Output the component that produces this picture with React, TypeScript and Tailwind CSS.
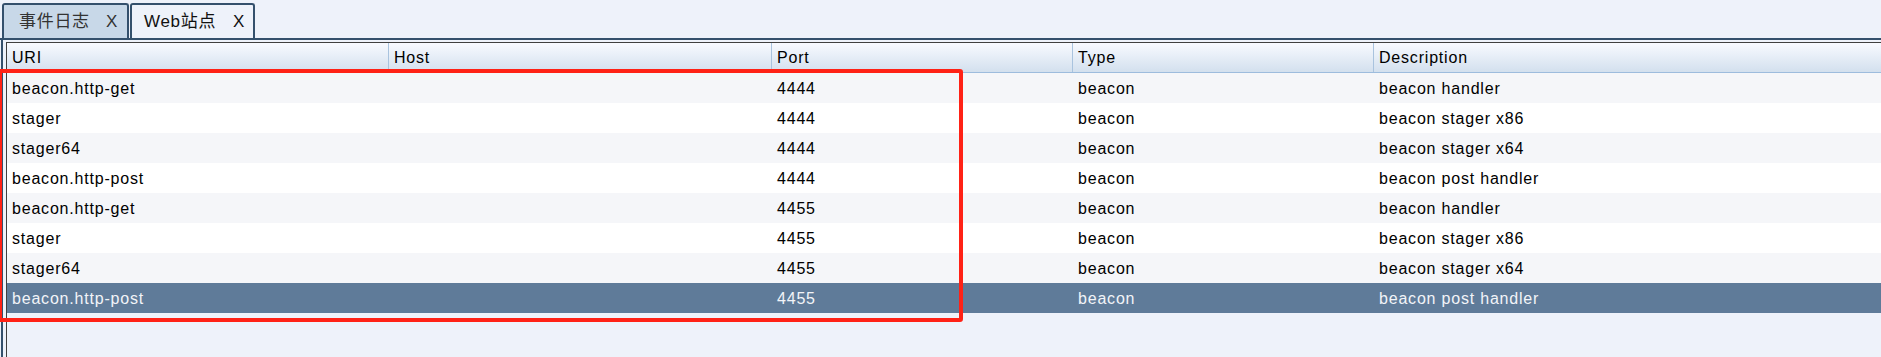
import React from "react";

const columns = [
	{ title: "URI", width: "w-[382px]" },
	{ title: "Host", width: "w-[383px]" },
	{ title: "Port", width: "w-[301px]" },
	{ title: "Type", width: "w-[301px]" },
	{ title: "Description", width: "flex-1" },
];

const rows = [
	["beacon.http-get", "", "4444", "beacon", "beacon handler"],
	["stager", "", "4444", "beacon", "beacon stager x86"],
	["stager64", "", "4444", "beacon", "beacon stager x64"],
	["beacon.http-post", "", "4444", "beacon", "beacon post handler"],
	["beacon.http-get", "", "4455", "beacon", "beacon handler"],
	["stager", "", "4455", "beacon", "beacon stager x86"],
	["stager64", "", "4455", "beacon", "beacon stager x64"],
	["beacon.http-post", "", "4455", "beacon", "beacon post handler"],
];

const font = {
	fontFamily: '"Liberation Sans", "Noto Sans CJK SC", Arial, sans-serif',
};

function Tab({ label, active }: { label: string; active?: boolean }) {
	return (
		<div
			className={
				"flex items-center h-[35px] border-2 border-b-0 border-[#34506c] rounded-t-[3px] text-[17px] tracking-[0.7px] " +
				(active
					? "bg-[#eef2fa] text-[#111] w-[125px] pl-[12px]"
					: "bg-[#c8d8e8] text-[#333] w-[127px] pl-[15px]")
			}
		>
			<span>{label}</span>
			<span className={active ? "ml-auto mr-[8px]" : "ml-auto mr-[9px]"}>X</span>
		</div>
	);
}

export default function App() {
	return (
		<div
			className="relative w-[1881px] h-[357px] overflow-hidden bg-[#eef2fa] text-black"
			style={font}
		>
			{/* tab strip */}
			<div className="flex items-end gap-[1px] h-[38px] pl-[2px]">
				<Tab label="事件日志" />
				<Tab label="Web站点" active />
			</div>
			<div className="h-[2px] bg-[#34506c]" />

			{/* tab content */}
			<div className="ml-[1px] h-[317px] border-l-2 border-[#34506c] pl-[3px] pt-[2px]">
				<div className="h-full border-l border-t border-[#404040] text-[16px] tracking-[0.8px]">
					<div className="flex h-[30px] border-b border-[#9dbcdd] bg-gradient-to-b from-[#f8faff] to-[#d3e0ee]">
						{columns.map((c) => (
							<div
								key={c.title}
								className={
									c.width +
									" flex items-center pl-[5px] pt-[1px] border-r border-[#a9c3de] last:border-r-0"
								}
							>
								{c.title}
							</div>
						))}
					</div>
					{rows.map((r, i) => {
						const selected = i === rows.length - 1;
						return (
							<div
								key={i}
								className={
									"flex h-[30px] " +
									(selected
										? "bg-[#5f7b99] text-[#f2f4f8]"
										: i % 2 === 0
											? "bg-[#f5f6f9]"
											: "bg-white")
								}
							>
								{r.map((cell, j) => (
									<div
										key={j}
										className={columns[j].width + " flex items-center pl-[5px] pt-[2px]"}
									>
										{cell}
									</div>
								))}
							</div>
						);
					})}
				</div>
			</div>

			{/* annotation box */}
			<div className="absolute left-[-2px] top-[69px] w-[965px] h-[253px] border-4 border-[#ff2216] rounded-[3px] pointer-events-none" />
		</div>
	);
}
